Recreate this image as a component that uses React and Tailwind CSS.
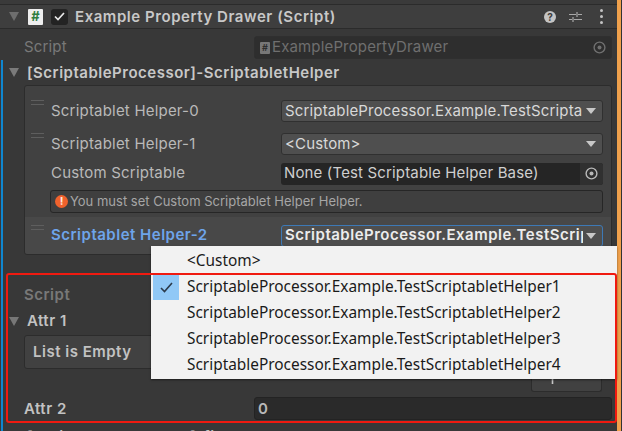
import React from "react";

const Caret = ({ className = "" }) => (
  <svg width="10" height="9" viewBox="0 0 10 9" className={className}>
    <path d="M0 0H10L5 9Z" fill="currentColor" />
  </svg>
);

const Target = ({ className = "" }) => (
  <svg width="13" height="13" viewBox="0 0 13 13" className={className}>
    <circle cx="6.5" cy="6.5" r="5.4" fill="none" stroke="currentColor" strokeWidth="1.4" />
    <circle cx="6.5" cy="6.5" r="2" fill="currentColor" />
  </svg>
);

const Drag = ({ className = "" }) => (
  <div className={"flex w-[13px] shrink-0 flex-col gap-[3px] " + className}>
    <div className="h-px bg-[#5e5e5e]" />
    <div className="h-px bg-[#5e5e5e]" />
  </div>
);

const Select = ({ text, active }) => (
  <div
    className={
      "flex h-[22px] w-[322px] shrink-0 items-center justify-between overflow-hidden rounded-[3px] border pl-[3px] pr-[6px] " +
      (active ? "border-[#3d79b6] bg-[#4e4e4e] font-semibold tracking-[0.5px] text-[#ececec]" : "border-[#303030] bg-[#4f4f4f] text-[#d8d8d8]")
    }
  >
    <span className="w-[298px] overflow-hidden whitespace-nowrap">{text}</span>
    <svg width="10" height="6" viewBox="0 0 10 6" className="shrink-0 text-[#c8c8c8]">
      <path d="M0 0H10L5 6Z" fill="currentColor" />
    </svg>
  </div>
);

const Row = ({ label, children, drag = true, h = "h-[32px]", labelClass = "text-[#b9b9b9] tracking-[0.2px]", className = "" }) => (
  <div className={"flex items-center pr-[8px] " + h + " " + className}>
    <div className="w-[26px] shrink-0">{drag && <Drag className="-mt-[11px] ml-[6px]" />}</div>
    <span className={"w-[230px] shrink-0 " + labelClass}>{label}</span>
    {children}
  </div>
);

const items = ["1", "2", "3", "4"];

export default function App() {
  return (
    <div className="relative flex h-[431px] w-[622px] overflow-hidden bg-[#383838] font-['Inter',sans-serif] text-[15px] tracking-[0.15px]">
      <div className="flex w-[617px] shrink-0 flex-col">
        <div className="h-[4px] shrink-0 bg-[#3a3a3a]" />
        <div className="flex h-[25px] shrink-0 items-center border-y border-[#2b2b2b] bg-[#3e3e3e] pl-[9px] pr-[14px]">
          <Caret className="text-[#6e6e6e]" />
          <div className="ml-[9px] flex h-[16px] w-[15px] items-center justify-center rounded-[1px] bg-[#eeeeee] text-[13px] font-bold leading-none text-[#2f7d3f]">#</div>
          <div className="ml-[8px] flex h-[16px] w-[17px] items-center justify-center rounded-[3px] bg-[#232323]">
            <svg width="11" height="9" viewBox="0 0 11 9"><path d="M1 4.5L4 7.5L10 1" fill="none" stroke="#e8e8e8" strokeWidth="1.7" /></svg>
          </div>
          <span className="ml-[7px] pt-[1px] font-semibold tracking-[0.55px] text-[#c8c8c8]">Example Property Drawer (Script)</span>
          <div className="ml-auto flex items-center">
            <div className="flex h-[12px] w-[12px] items-center justify-center rounded-full bg-[#c4c4c4] text-[10px] font-bold leading-none text-[#3e3e3e]">?</div>
            <svg width="13" height="12" viewBox="0 0 13 12" className="ml-[13px]" fill="none" stroke="#a8a8a8" strokeWidth="1.2">
              <path d="M0 3.5H7M9 3.5H13M8 1V6M0 8.5H3M5 8.5H13M4 6V11" />
            </svg>
            <div className="ml-[18px] flex flex-col gap-[3px]">
              <div className="h-[3px] w-[3px] rounded-full bg-[#c4c4c4]" />
              <div className="h-[3px] w-[3px] rounded-full bg-[#c4c4c4]" />
              <div className="h-[3px] w-[3px] rounded-full bg-[#c4c4c4]" />
            </div>
          </div>
        </div>

        <div className="flex h-[31px] shrink-0 items-center pl-[24px] pr-[5px] pt-[6px]">
          <span className="w-[230px] text-[#787878]">Script</span>
          <div className="flex h-[23px] w-[358px] items-center rounded-[3px] border border-[#2f2f2f] bg-[#2e2e2e] pl-[5px] pr-[5px] text-[#6f6f6f]">
            <div className="flex h-[12px] w-[10px] items-center justify-center rounded-[1px] bg-[#777777] text-[9px] font-bold leading-none text-[#2e2e2e]">#</div>
            <span className="ml-[2px]">ExamplePropertyDrawer</span>
            <Target className="ml-auto text-[#707070]" />
          </div>
        </div>

        <div className="flex min-h-0 grow flex-col pl-[1px]">
          <div className="flex min-h-0 grow flex-col border-l-[2px] border-[#0f86cf]">
            <div className="flex h-[25px] shrink-0 items-center pl-[6px]">
              <Caret className="text-[#7a7a7a]" />
              <span className="ml-[8px] pt-[1px] font-semibold tracking-[0.5px] text-[#c8c8c8]">[ScriptableProcessor]-ScriptabletHelper</span>
            </div>

            <div className="ml-[21px] mr-[5px] flex h-[170px] shrink-0 flex-col rounded-[3px] border border-[#2c2c2c] bg-[#414141] pt-[9px]">
              <Row label="Scriptablet Helper-0" h="h-[32px]"><Select text="ScriptableProcessor.Example.TestScripta" /></Row>
              <Row label="Scriptablet Helper-1" h="h-[34px]"><Select text="<Custom>" /></Row>
              <Row label="Custom Scriptable" drag={false} h="h-[25px]">
                <div className="flex h-[22px] w-[322px] shrink-0 items-center justify-between overflow-hidden rounded-[3px] bg-[#252525] pl-[3px] text-[#cfcfcf]">
                  <span>None (Test Scriptable Helper Base)</span>
                  <div className="flex h-full w-[23px] items-center justify-center bg-[#303030]"><Target className="text-[#b8b8b8]" /></div>
                </div>
              </Row>
              <div className="ml-[25px] mr-[8px] mt-[4px] flex h-[23px] shrink-0 items-center rounded-[3px] border border-[#262626] bg-[#3f3f3f] pl-[4px] text-[13px] tracking-[0px] text-[#a6a6a6]">
                <div className="flex h-[13px] w-[13px] items-center justify-center rounded-full bg-[#f0622d] text-[11px] font-bold leading-none text-[#ffe9e0]">!</div>
                <span className="ml-[2px]">You must set Custom Scriptablet Helper Helper.</span>
              </div>
              <Row label="Scriptablet Helper-2" h="h-[37px]" labelClass="font-semibold tracking-[0.5px] text-[#6ea4ea]" className="mt-[4px] rounded-b-[3px] bg-[#484848]">
                <Select active text="ScriptableProcessor.Example.TestScriptabletHelper2" />
              </Row>
            </div>

            <div className="mt-[27px] flex h-[26px] shrink-0 items-center pl-[21px]"><span className="font-semibold tracking-[0.5px] text-[#787878]">Script</span></div>
            <div className="flex h-[26px] shrink-0 items-center pl-[6px]">
              <Caret className="text-[#777777]" />
              <span className="ml-[8px] font-semibold tracking-[0.5px] text-[#c2c2c2]">Attr 1</span>
            </div>
            <div className="ml-[21px] mr-[6px] mt-[1px] flex h-[34px] shrink-0 items-center rounded-[3px] border border-[#2c2c2c] bg-[#414141] pl-[8px] font-semibold tracking-[0.5px] text-[#c2c2c2]">List is Empty</div>
            <div className="mr-[15px] flex h-[23px] shrink-0 justify-end">
              <div className="flex h-full w-[71px] items-start justify-around rounded-b-[3px] border border-t-0 border-[#2c2c2c] bg-[#414141] px-[6px]">
                <svg width="13" height="15" viewBox="0 0 13 15" fill="none" stroke="#c8c8c8" strokeWidth="1.6"><path d="M6.5 0V15M0 6H13" /></svg>
                <svg width="11" height="10" viewBox="0 0 11 10" fill="none" stroke="#c8c8c8" strokeWidth="1.6"><path d="M0 5H11" /></svg>
              </div>
            </div>
            <div className="mt-[2px] flex h-[29px] shrink-0 items-center pl-[21px] pr-[2px]">
              <span className="w-[230px] pt-[1px] font-semibold tracking-[0.5px] text-[#c2c2c2]">Attr 2</span>
              <div className="flex h-[23px] w-[358px] items-center rounded-[3px] border border-[#232323] bg-[#2a2a2a] pl-[3px] pt-[1px] font-semibold text-[#b8b8b8]">0</div>
            </div>
            <div className="flex items-center pl-[6px] pt-[3px]">
              <Caret className="text-[#777777]" />
              <span className="ml-[8px] whitespace-nowrap font-semibold tracking-[0.5px] text-[#c2c2c2]">[ScriptableProcessor]-fieldHelper</span>
            </div>
          </div>
        </div>
      </div>
      <div className="w-[4px] shrink-0 bg-[#f0a14c]" />
      <div className="w-[1px] shrink-0 bg-[#333333]" />

      <div className="absolute left-[151px] top-[246px] flex h-[133px] w-[466px] flex-col bg-[#f2f2f2] pt-[2px] font-['Noto_Sans',sans-serif] text-[15.4px] tracking-normal text-[#1a1a1a] shadow-[0_1px_2px_rgba(0,0,0,0.5)]">
        <div className="flex h-[26px] items-center pl-[36px]">&lt;Custom&gt;</div>
        {items.map((n, i) => (
          <div key={n} className="flex h-[26px] items-center">
            <div className={"ml-[2px] mr-[8px] flex h-[25px] w-[26px] items-center justify-center " + (i === 0 ? "bg-[#90c8f6]" : "")}>
              {i === 0 && <svg width="13" height="11" viewBox="0 0 13 11"><path d="M1 6L4.5 9.5L12 1" fill="none" stroke="#2b3a4a" strokeWidth="1.6" /></svg>}
            </div>
            <span>ScriptableProcessor.Example.TestScriptabletHelper{n}</span>
          </div>
        ))}
      </div>
      <div className="pointer-events-none absolute left-[6px] top-[273px] h-[150px] w-[611px] rounded-[3px] border-2 border-[#f01a10]" />
    </div>
  );
}
